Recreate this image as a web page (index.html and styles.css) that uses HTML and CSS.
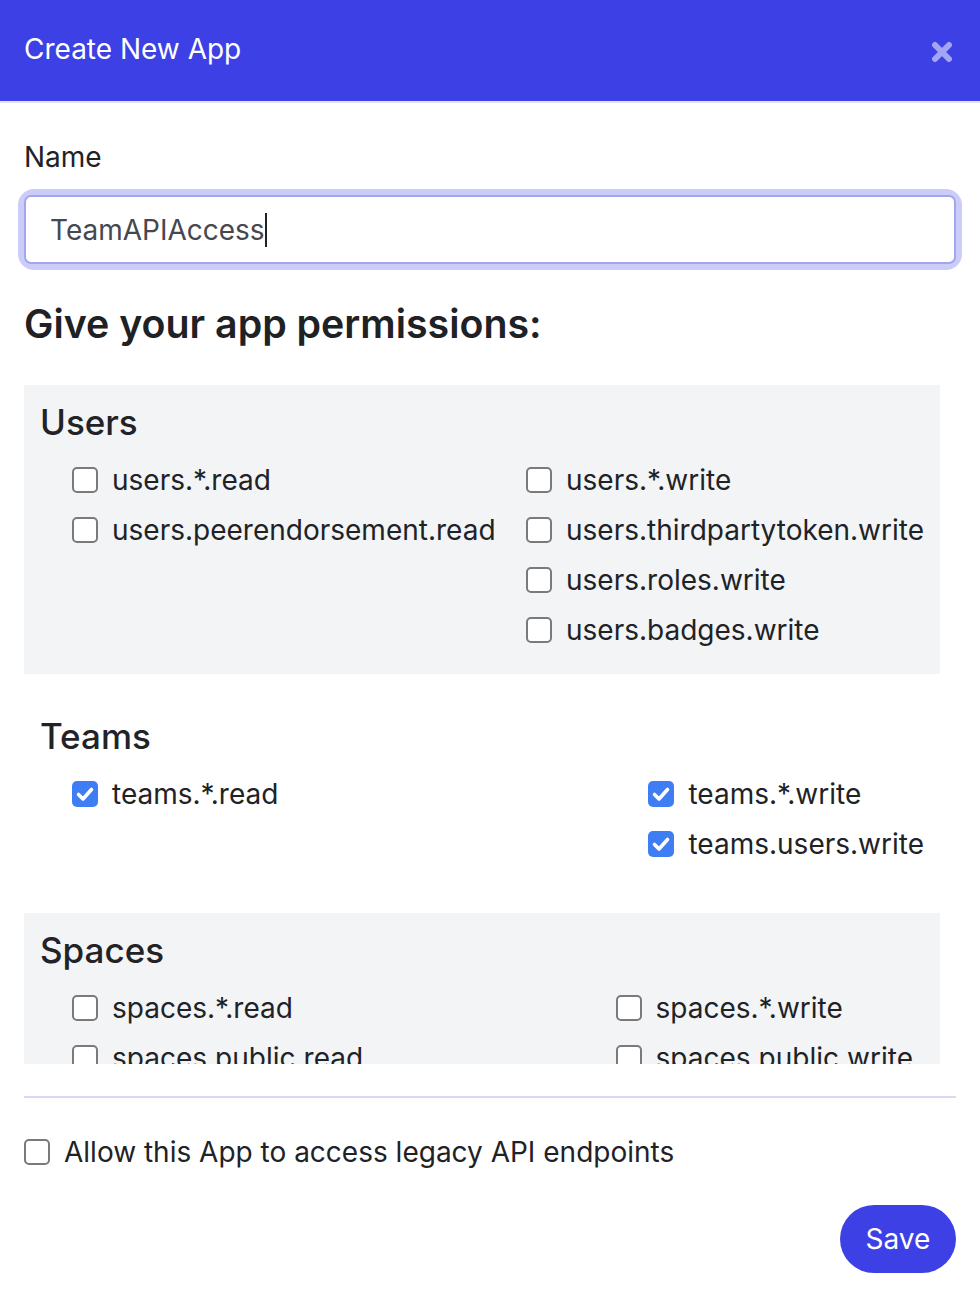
FILE: index.html
```html
<!DOCTYPE html>
<html lang="en">
<head>
<meta charset="utf-8">
<title>Create New App</title>
<link rel="stylesheet" href="styles.css">
</head>
<body>
<div class="modal">
  <header class="modal-header">
    <h1 class="modal-title">Create New App</h1>
    <button class="close" aria-label="Close">
      <svg width="22" height="22" viewBox="0 0 22 22"><path d="M4 4 L18 18 M18 4 L4 18" stroke="#a3a5f4" stroke-width="6" stroke-linecap="round"/></svg>
    </button>
  </header>
  <main class="modal-body">
    <label class="field-label" for="name">Name</label>
    <div class="input-wrap"><div class="input" id="name">TeamAPIAccess<span class="caret"></span></div></div>
    <h2 class="perm-title">Give your app permissions:</h2>
    <div class="scroll">
      <section class="group shaded">
        <h3 class="group-title">Users</h3>
        <div class="cols">
          <ul class="col">
            <li class="opt"><span class="box"></span>users.*.read</li>
            <li class="opt"><span class="box"></span>users.peerendorsement.read</li>
          </ul>
          <ul class="col">
            <li class="opt"><span class="box"></span>users.*.write</li>
            <li class="opt"><span class="box"></span>users.thirdpartytoken.write</li>
            <li class="opt"><span class="box"></span>users.roles.write</li>
            <li class="opt"><span class="box"></span>users.badges.write</li>
          </ul>
        </div>
      </section>
      <section class="group">
        <h3 class="group-title">Teams</h3>
        <div class="cols">
          <ul class="col">
            <li class="opt"><span class="box on"><svg width="26" height="26" viewBox="0 0 26 26"><path d="M6.5 13.5 L11 18 L19.5 8.5" fill="none" stroke="#fff" stroke-width="3.6" stroke-linecap="round" stroke-linejoin="round"/></svg></span>teams.*.read</li>
          </ul>
          <ul class="col">
            <li class="opt"><span class="box on"><svg width="26" height="26" viewBox="0 0 26 26"><path d="M6.5 13.5 L11 18 L19.5 8.5" fill="none" stroke="#fff" stroke-width="3.6" stroke-linecap="round" stroke-linejoin="round"/></svg></span>teams.*.write</li>
            <li class="opt"><span class="box on"><svg width="26" height="26" viewBox="0 0 26 26"><path d="M6.5 13.5 L11 18 L19.5 8.5" fill="none" stroke="#fff" stroke-width="3.6" stroke-linecap="round" stroke-linejoin="round"/></svg></span>teams.users.write</li>
          </ul>
        </div>
      </section>
      <section class="group shaded">
        <h3 class="group-title">Spaces</h3>
        <div class="cols">
          <ul class="col">
            <li class="opt"><span class="box"></span>spaces.*.read</li>
            <li class="opt"><span class="box"></span>spaces.public.read</li>
            <li class="opt"><span class="box"></span>spaces.private.read</li>
          </ul>
          <ul class="col">
            <li class="opt"><span class="box"></span>spaces.*.write</li>
            <li class="opt"><span class="box"></span>spaces.public.write</li>
            <li class="opt"><span class="box"></span>spaces.private.write</li>
          </ul>
        </div>
      </section>
    </div>
    <hr class="sep">
    <label class="legacy"><span class="box"></span>Allow this App to access legacy API endpoints</label>
    <div class="actions"><button class="save">Save</button></div>
  </main>
</div>
</body>
</html>
```
FILE: styles.css
```css
* { box-sizing: border-box; }
html, body { margin: 0; padding: 0; background: #fff; }
body {
  font-family: Inter, "Noto Sans", "Liberation Sans", sans-serif;
  color: #212226;
  width: 980px;
  height: 1302px;
  overflow: hidden;
}
.modal-header {
  height: 103px;
  background: #3d40e4;
  border-bottom: 2px solid #e3e3e8;
  display: flex;
  align-items: center;
  justify-content: space-between;
  padding: 0 27px 0 24px;
}
.modal-title {
  margin: 0;
  font-size: 28px;
  font-weight: 400;
  color: #fff;
  line-height: 1.2;
  margin-top: -2px;
}
.close {
  border: 0;
  background: none;
  padding: 0;
  width: 22px;
  height: 22px;
  display: block;
  margin-top: 2px;
}
.close svg { display: block; }
.modal-body { padding: 0 24px; }
.field-label {
  display: block;
  margin-top: 38px;
  font-size: 28px;
  line-height: 32px;
}
.input-wrap {
  margin-top: 22px;
  border-radius: 10px;
  box-shadow: 0 0 0 6px #cbcdf8;
}
.input {
  height: 69px;
  border: 2px solid #a3a5ee;
  border-radius: 7px;
  padding: 0 24px;
  display: flex;
  align-items: center;
  font-size: 28px;
  color: #46474f;
  background: #fff;
}
.caret {
  display: inline-block;
  width: 2px;
  height: 34px;
  background: #222;
}
.perm-title {
  margin: 36px 0 37px;
  font-size: 39.3px;
  font-weight: 600;
  line-height: 48px;
  color: #202125;
}
.scroll {
  height: 679px;
  overflow: hidden;
  padding-right: 16px;
}
.group {
  padding: 16px 16px 19px 16px;
  margin-bottom: 25px;
}
.group.shaded { background: #f3f4f6; }
.group-title {
  margin: 0 0 12px;
  font-size: 35px;
  font-weight: 500;
  line-height: 42px;
  color: #222327;
}
.cols {
  display: flex;
  justify-content: space-between;
  padding-left: 32px;
}
.col { list-style: none; margin: 0; padding: 0; }
.opt {
  height: 50px;
  display: flex;
  align-items: center;
  gap: 14px;
  font-size: 28px;
  white-space: nowrap;
}
.box {
  flex: none;
  width: 26px;
  height: 26px;
  border: 2px solid #7a7a7e;
  border-radius: 5px;
  background: #fff;
  display: block;
}
.box.on {
  border: 0;
  background: #3f7df5;
}
.box svg { display: block; }
.sep {
  margin: 32px 0 0;
  border: 0;
  height: 2px;
  background: #d8d9f7;
}
.legacy {
  margin-top: 29px;
  height: 50px;
  display: flex;
  align-items: center;
  gap: 14px;
  font-size: 28px;
}
.actions {
  margin-top: 28px;
  display: flex;
  justify-content: flex-end;
}
.save {
  width: 116px;
  height: 68px;
  border: 0;
  border-radius: 34px;
  background: #3d40e4;
  color: #fff;
  font-family: inherit;
  font-size: 28px;
  padding: 0;
}
```
